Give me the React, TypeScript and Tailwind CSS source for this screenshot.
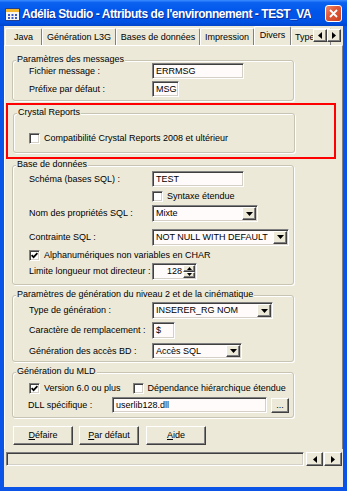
import React from "react";

const sunken =
  "border border-t-[#808080] border-l-[#808080] border-r-white border-b-white shadow-[inset_1px_1px_0_#404040,inset_-1px_-1px_0_#d4d0c8]";
const raised =
  "border border-t-white border-l-white border-r-[#404040] border-b-[#404040] shadow-[inset_-1px_-1px_0_#808080]";

type P = { cls?: string; children?: React.ReactNode };

function Edit({ cls = "", children }: P) {
  return (
    <div className={`${sunken} bg-[#fffbfb] flex items-center pl-[3px] shrink-0 whitespace-nowrap overflow-hidden ${cls}`}>
      {children}
    </div>
  );
}

function DownTri() {
  return (
    <svg width="7" height="4" viewBox="0 0 7 4">
      <path d="M0 0H7L3.5 4Z" fill="#000" />
    </svg>
  );
}

function Select({ cls = "", children }: P) {
  return (
    <div className={`${sunken} bg-[#fffbfb] flex items-stretch p-[1px] shrink-0 ${cls}`}>
      <span className="flex-1 flex items-center pl-[2px] whitespace-nowrap overflow-hidden">{children}</span>
      <span className={`${raised} bg-[#ece9d8] w-[14px] flex items-center justify-center`}>
        <DownTri />
      </span>
    </div>
  );
}

function Check({ checked = false }: { checked?: boolean }) {
  return (
    <span className={`${sunken} bg-white w-[11px] h-[11px] shrink-0 flex items-center justify-center`}>
      {checked && (
        <svg width="7" height="7" viewBox="0 0 7 7">
          <path d="M0.6 3.1L2.6 5.2L6.4 1.2" stroke="#000" strokeWidth="1.7" fill="none" />
        </svg>
      )}
    </span>
  );
}

function Group({ label, cls = "", children }: P & { label: string }) {
  return (
    <div
      className={`relative shrink-0 border border-[#c7c4b4] rounded-[3px] shadow-[inset_1px_1px_0_#ffffff,1px_1px_0_#ffffff] flex flex-col ${cls}`}
    >
      <span className="absolute left-[3px] top-[-7px] px-[1px] bg-[#ece9d8] leading-[11px] whitespace-nowrap">
        {label}
      </span>
      {children}
    </div>
  );
}

function Row({ label, cls = "", children }: P & { label: string }) {
  return (
    <div className={`flex items-center pl-[16px] shrink-0 ${cls}`}>
      <span className="w-[123px] shrink-0 whitespace-nowrap">{label}</span>
      {children}
    </div>
  );
}

function Btn({ children, cls = "" }: P) {
  return (
    <div className={`${raised} bg-[#ece9d8] w-[60px] h-[19px] flex items-center justify-center shrink-0 ${cls}`}>
      {children}
    </div>
  );
}

function ArrowBtn({ dir, cls = "" }: { dir: "l" | "r"; cls?: string }) {
  return (
    <div className={`${raised} bg-[#ece9d8] flex items-center justify-center ${cls}`}>
      <svg width="4" height="7" viewBox="0 0 4 7">
        {dir === "l" ? <path d="M4 0V7L0 3.5Z" fill="#000" /> : <path d="M0 0V7L4 3.5Z" fill="#000" />}
      </svg>
    </div>
  );
}

function Tab({ children, cls = "", selected = false }: P & { selected?: boolean }) {
  return (
    <div
      className={`shrink-0 flex items-center justify-center whitespace-nowrap border-t border-l border-t-white border-l-white border-r border-r-[#808080] rounded-t-[2px] bg-[#ece9d8] ${
        selected ? "h-[20px] -mb-[1px] relative z-10 pb-[2px]" : "h-[17px]"
      } ${cls}`}
    >
      {children}
    </div>
  );
}

export default function App() {
  return (
    <div className="w-[347px] h-[491px] bg-[#0a55e8] flex flex-col overflow-hidden font-['Liberation_Sans',Arial,sans-serif] text-[9px] leading-[11px] text-black">
      {/* Title bar */}
      <div className="h-[26px] shrink-0 flex items-center bg-[linear-gradient(to_bottom,#3d8dff_0%,#0b62f0_10%,#0056ea_45%,#0052e4_85%,#0044cc_100%)]">
        <svg width="15" height="13" viewBox="0 0 15 13" className="ml-[5px] mt-[2px] shrink-0">
          <rect x="0.5" y="0.5" width="14" height="12" fill="#f4f4f4" stroke="#23408f" />
          <rect x="1" y="1" width="13" height="3" fill="#f2b830" />
          <rect x="3" y="6" width="2" height="2" fill="#3a5cc8" />
          <rect x="6.5" y="6" width="2" height="2" fill="#3a5cc8" />
          <rect x="10" y="6" width="2" height="2" fill="#3a5cc8" />
          <rect x="3" y="9" width="2" height="2" fill="#3a5cc8" />
          <rect x="6.5" y="9" width="2" height="2" fill="#3a5cc8" />
          <rect x="10" y="9" width="2" height="2" fill="#3a5cc8" />
        </svg>
        <span className="ml-[2px] mt-[1px] min-w-0 overflow-hidden text-white font-bold text-[12px] leading-[14px] tracking-[-0.45px] whitespace-nowrap [text-shadow:1px_1px_0_#0a2a9a]">
          Adélia Studio - Attributs de l'environnement - TEST_VA
        </span>
        <div className="ml-auto mr-[5px] w-[17px] h-[17px] rounded-[3px] border border-white bg-[linear-gradient(135deg,#f08a6c_0%,#e05a3a_40%,#c8401e_100%)] flex items-center justify-center shrink-0">
          <svg width="9" height="9" viewBox="0 0 9 9">
            <path d="M1 1L8 8M8 1L1 8" stroke="#fff" strokeWidth="1.8" />
          </svg>
        </div>
      </div>

      {/* Client */}
      <div className="mx-[4px] h-[461px] bg-[#ece9d8] flex flex-col shrink-0">
        {/* Tab strip */}
        <div className="relative h-[19px] shrink-0 flex items-end pl-[1px] overflow-hidden">
          <Tab cls="w-[37px]">Java</Tab>
          <Tab cls="w-[74px]">Génération L3G</Tab>
          <Tab cls="w-[84px]">Bases de données</Tab>
          <Tab cls="w-[54px]">Impression</Tab>
          <Tab cls="w-[37px]" selected>
            Divers
          </Tab>
          <Tab cls="w-[40px] justify-start pl-[3px]">Types</Tab>
          <div className="absolute right-[2px] top-[3px] flex">
            <ArrowBtn dir="l" cls="w-[14px] h-[13px]" />
            <ArrowBtn dir="r" cls="w-[14px] h-[13px]" />
          </div>
        </div>

        {/* Tab page */}
        <div className="h-[404px] shrink-0 border-t border-l border-t-white border-l-white border-r border-r-[#808080] flex flex-col">
          {/* Paramètres des messages */}
          <Group label="Paramètres des messages" cls="ml-[7px] mt-[14px] w-[282px] h-[41px]">
            <Row label="Fichier message :" cls="mt-[2px] h-[16px]">
              <Edit cls="w-[92px] h-[16px]">ERRMSG</Edit>
            </Row>
            <Row label="Préfixe par défaut :" cls="mt-[2px] h-[16px]">
              <Edit cls="w-[27px] h-[16px]">MSG</Edit>
            </Row>
          </Group>

          {/* Red highlight */}
          <div className="ml-[1px] mt-[2px] w-[330px] h-[56px] border-2 border-[#ff0000] flex flex-col shrink-0">
            <Group label="Crystal Reports" cls="ml-[5px] mt-[8px] w-[282px] h-[40px]">
              <div className="flex items-center mt-[19px] pl-[15px] h-[11px]">
                <Check />
                <span className="ml-[4px] whitespace-nowrap">Compatibilité Crystal Reports 2008 et ultérieur</span>
              </div>
            </Group>
          </div>

          {/* Base de données */}
          <Group label="Base de données" cls="ml-[7px] mt-[6px] w-[282px] h-[120px]">
            <Row label="Schéma (bases SQL) :" cls="mt-[5px] h-[16px]">
              <Edit cls="w-[92px] h-[16px]">TEST</Edit>
            </Row>
            <div className="flex items-center mt-[4px] h-[11px] pl-[139px]">
              <Check />
              <span className="ml-[4px] whitespace-nowrap">Syntaxe étendue</span>
            </div>
            <Row label="Nom des propriétés SQL :" cls="mt-[3px] h-[17px]">
              <Select cls="w-[106px] h-[17px]">Mixte</Select>
            </Row>
            <Row label="Contrainte SQL :" cls="mt-[7px] h-[16px]">
              <Select cls="w-[137px] h-[17px]">NOT NULL WITH DEFAULT</Select>
            </Row>
            <div className="flex items-center mt-[5px] h-[11px] pl-[16px]">
              <Check checked />
              <span className="ml-[4px] whitespace-nowrap">Alphanumériques non variables en CHAR</span>
            </div>
            <Row label="Limite longueur mot directeur :" cls="mt-[2px] h-[17px]">
              <div className={`${sunken} bg-[#fffbfb] w-[45px] h-[17px] flex items-stretch p-[1px] shrink-0`}>
                <span className="flex-1 flex items-center justify-end pr-[1px]">128</span>
                <span className="w-[12px] flex flex-col">
                  <span className={`${raised} bg-[#ece9d8] flex-1 flex items-center justify-center`}>
                    <svg width="5" height="3" viewBox="0 0 5 3">
                      <path d="M0 3H5L2.5 0Z" fill="#000" />
                    </svg>
                  </span>
                  <span className={`${raised} bg-[#ece9d8] flex-1 flex items-center justify-center`}>
                    <svg width="5" height="3" viewBox="0 0 5 3">
                      <path d="M0 0H5L2.5 3Z" fill="#000" />
                    </svg>
                  </span>
                </span>
              </div>
            </Row>
          </Group>

          {/* Paramètres de génération */}
          <Group
            label="Paramètres de génération du niveau 2 et de la cinématique"
            cls="ml-[7px] mt-[10px] w-[282px] h-[67px]"
          >
            <Row label="Type de génération :" cls="mt-[6px] h-[17px]">
              <Select cls="w-[121px] h-[17px]">INSERER_RG NOM</Select>
            </Row>
            <Row label="Caractère de remplacement :" cls="mt-[3px] h-[17px]">
              <Edit cls="w-[23px] h-[17px]">$</Edit>
            </Row>
            <Row label="Génération des accès BD :" cls="mt-[4px] h-[16px]">
              <Select cls="w-[90px] h-[16px]">Accès SQL</Select>
            </Row>
          </Group>

          {/* Génération du MLD */}
          <Group label="Génération du MLD" cls="ml-[7px] mt-[10px] w-[282px] h-[46px]">
            <div className="flex items-center mt-[10px] h-[11px] pl-[16px]">
              <Check checked />
              <span className="ml-[4px] whitespace-nowrap">Version 6.0 ou plus</span>
              <span className="ml-[12px]">
                <Check />
              </span>
              <span className="ml-[4px] whitespace-nowrap">Dépendance hiérarchique étendue</span>
            </div>
            <div className="flex items-center mt-[3px] h-[16px] pl-[15px]">
              <span className="w-[84px] shrink-0 whitespace-nowrap">DLL spécifique :</span>
              <Edit cls="w-[155px] h-[16px]">userlib128.dll</Edit>
              <div className={`${raised} bg-[#ece9d8] ml-[4px] w-[18px] h-[15px] flex items-center justify-center leading-[8px] shrink-0`}>
                ...
              </div>
            </div>
          </Group>

          {/* Buttons */}
          <div className="flex mt-[8px] ml-[8px] shrink-0">
            <Btn>
              <span>
                <span className="underline">D</span>éfaire
              </span>
            </Btn>
            <Btn cls="ml-[6px]">
              <span>
                <span className="underline">P</span>ar défaut
              </span>
            </Btn>
            <Btn cls="ml-[7px]">
              <span>
                <span className="underline">A</span>ide
              </span>
            </Btn>
          </div>
        </div>

        {/* Bottom scroll bar */}
        <div className="flex mt-[3px] ml-[2px] h-[14px] shrink-0">
          <div className={`${sunken} w-[298px] h-[14px] bg-[#ece9d8]`} />
          <ArrowBtn dir="l" cls="ml-[2px] w-[17px] h-[14px]" />
          <ArrowBtn dir="r" cls="ml-[1px] w-[18px] h-[14px]" />
        </div>
      </div>
    </div>
  );
}
